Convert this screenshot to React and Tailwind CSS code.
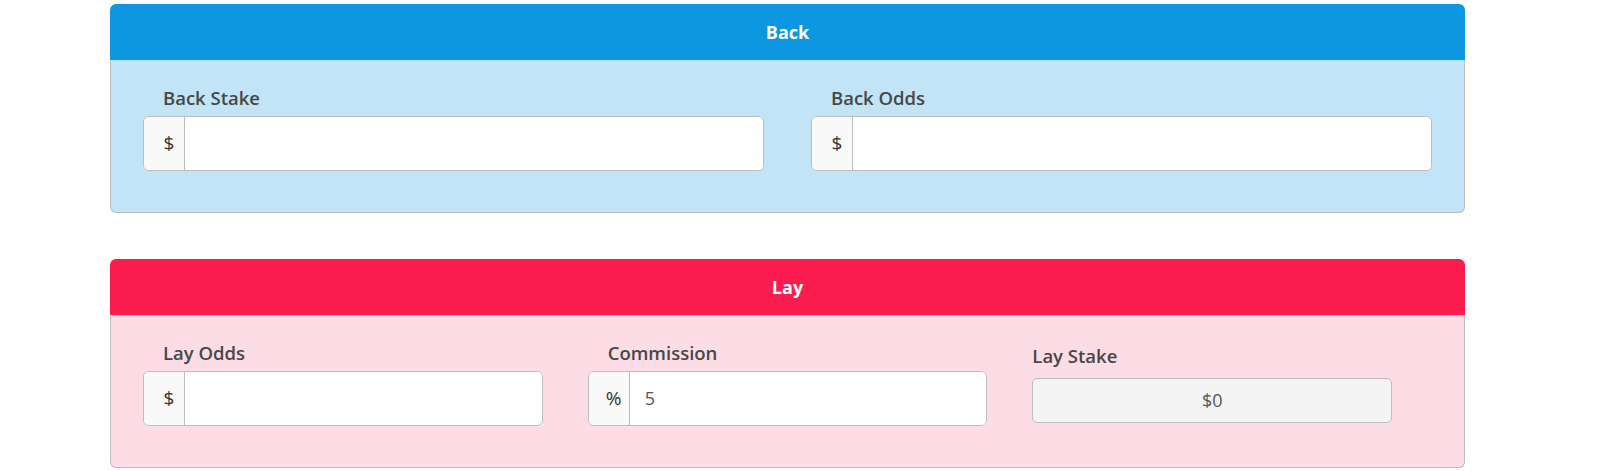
import React from "react";

const font = { fontFamily: '"Open Sans", "Noto Sans", Arial, sans-serif' };

const AddonInput = ({ label, addon, value }) => (
  <div className="flex flex-col">
    <label className="pl-5 text-[18.5px] font-semibold leading-[26px] text-[#474747] mb-[5px]">{label}</label>
    <div className="flex h-[55px] rounded-[6px] border border-[#bdbdbd] bg-white overflow-hidden">
      <span className="flex w-[41px] shrink-0 items-center justify-center pl-[10px] border-r border-[#bdbdbd] bg-[#f9f9f9] text-[19px] text-[#333]">
        {addon}
      </span>
      <input
        type="text"
        defaultValue={value}
        className="w-full px-[15px] text-[18px] text-[#555] outline-none bg-white"
      />
    </div>
  </div>
);

const Card = ({ title, head, body, children }) => (
  <div className="w-[1355px]">
    <div className={`h-[57px] rounded-t-[6px] flex items-center justify-center text-[18px] font-bold text-white border-b border-white/70 ${head}`}>
      {title}
    </div>
    <div className={`border border-t-0 border-[#bdbdbd] rounded-b-[6px] px-[32px] pt-[24px] pb-[41px] ${body}`}>
      {children}
    </div>
  </div>
);

export default function App() {
  return (
    <div className="min-h-screen bg-white pt-1 pl-[110px]" style={font}>
      <Card title="Back" head="bg-[#0c97e0]" body="bg-[#c1e5f6]">
        <div className="grid grid-cols-2 gap-[47px]">
          <AddonInput label="Back Stake" addon="$" />
          <AddonInput label="Back Odds" addon="$" />
        </div>
      </Card>

      <div className="h-[46px]" />

      <Card title="Lay" head="bg-[#fb1d4e]" body="bg-[#fcdde6]">
        <div className="grid grid-cols-3 gap-[45px]">
          <AddonInput label="Lay Odds" addon="$" />
          <AddonInput label="Commission" addon="%" value="5" />
          <div className="flex flex-col pt-[3px]">
            <label className="text-[18.5px] font-semibold leading-[26px] text-[#474747] mb-[9px]">Lay Stake</label>
            <div className="flex h-[45px] w-[360px] items-center justify-center rounded-[5px] border border-[#bdbdbd] bg-[#f4f4f4] text-[18px] text-[#555]">
              $0
            </div>
          </div>
        </div>
      </Card>
    </div>
  );
}
